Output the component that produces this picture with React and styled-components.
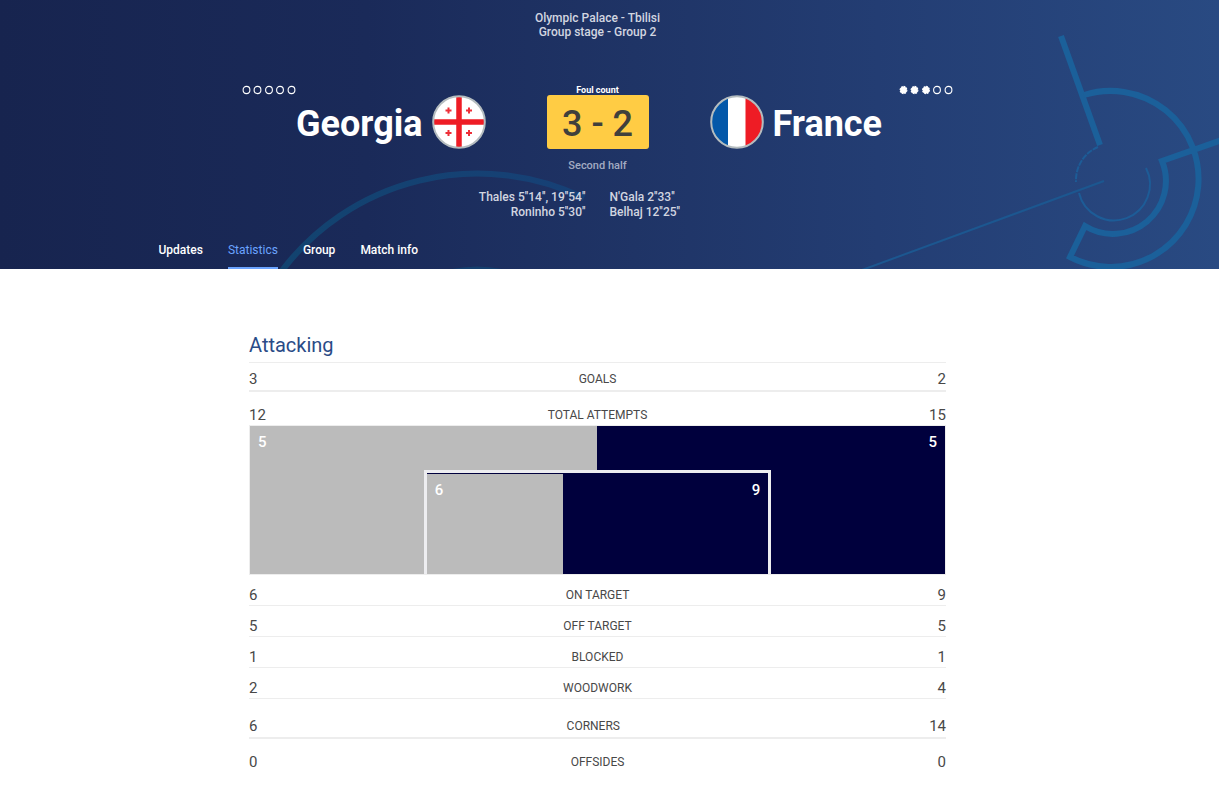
import React from 'react';
import styled, { createGlobalStyle } from 'styled-components';

const tabs = ['Updates', 'Statistics', 'Group', 'Match info'];

const mainStats = [
  { label: 'Goals', home: 3, away: 2 },
];

const attempts = {
  label: 'Total attempts', home: 12, away: 15,
};

const attemptStats = [
  { label: 'On target', home: 6, away: 9 },
  { label: 'Off target', home: 5, away: 5 },
  { label: 'Blocked', home: 1, away: 1 },
  { label: 'Woodwork', home: 2, away: 4 },
];

function HeaderArt() {
  return (
    <HeaderArtStyled viewBox="0 0 1219 269" preserveAspectRatio="xMidYMid slice" aria-hidden="true">
      <defs>
        <linearGradient id="arcFade" gradientUnits="userSpaceOnUse" x1="280" y1="0" x2="590" y2="0">
          <stop offset="0" stopColor="#12436f" />
          <stop offset="1" stopColor="#174076" />
        </linearGradient>
      </defs>
      <g fill="none">
        <path d="M281 272 A245 245 0 0 1 584 198" stroke="url(#arcFade)" strokeWidth="6" />
        <path d="M440 274 Q477 263 514 274" stroke="#15406f" strokeWidth="4" />
        <g stroke="#1b609a" strokeWidth="6">
          <path d="M1061 36 L1100 145" />
          <path d="M1084 95 A88 88 0 1 1 1070 257 L1085 226 A53 53 0 0 0 1162 161 L1222 140" />
        </g>
        <path d="M1098 147 A36 36 0 0 0 1076 182" stroke="#1d5c97" strokeWidth="2" strokeDasharray="6 1" />
        <path d="M1079 193 A36 36 0 1 0 1146 168" stroke="#1d5c97" strokeWidth="2" />
        <path d="M862 270 L1104 181" stroke="#1c5790" strokeWidth="2" />
      </g>
    </HeaderArtStyled>
  );
}

function FoulDots({ count }) {
  return (
    <svg width="54" height="10" viewBox="0 0 54 10" role="img" aria-label={`${count} fouls`}>
      {[4.5, 15.5, 27, 38, 49.5].map((cx, i) => (
        <ellipse
          key={cx}
          cx={cx}
          cy="5"
          rx="3.4"
          ry="3.6"
          fill={i < count ? '#fff' : 'none'}
          stroke="#fff"
          strokeWidth="1.1"
          strokeDasharray={i < count ? '1.8 0.9' : undefined}
        />
      ))}
    </svg>
  );
}

function GeorgiaFlag() {
  return (
    <svg width="54" height="54" viewBox="0 0 54 54" role="img" aria-label="Georgia flag">
      <circle cx="27" cy="27" r="26" fill="#fff" />
      <path d="M27 2 V52 M2 27 H52" stroke="#ee1c25" strokeWidth="5.5" />
      <path
        d="M16.5 12.5 v6 M13.5 15.5 h6 M37 12.5 v6 M34 15.5 h6 M16.5 35 v6 M13.5 38 h6 M37 35 v6 M34 38 h6"
        stroke="#ee2f38"
        strokeWidth="2"
      />
      <circle cx="27" cy="27" r="25.8" fill="none" stroke="#b4bcbf" strokeWidth="2" />
    </svg>
  );
}

function FranceFlag() {
  return (
    <svg width="54" height="54" viewBox="0 0 54 54" role="img" aria-label="France flag">
      <clipPath id="franceClip"><circle cx="27" cy="27" r="26" /></clipPath>
      <g clipPath="url(#franceClip)">
        <rect width="54" height="54" fill="#fff" />
        <rect width="18" height="54" fill="#0458a9" />
        <rect x="35.5" width="19" height="54" fill="#ee1c25" />
      </g>
      <circle cx="27" cy="27" r="25.8" fill="none" stroke="#b4bcbf" strokeWidth="2" />
    </svg>
  );
}

function StatRow({ stat, size }) {
  return (
    <StatRowStyled $size={size}>
      <td>{stat.home}</td>
      <th scope="row">{stat.label}</th>
      <td>{stat.away}</td>
    </StatRowStyled>
  );
}

function Pitch() {
  return (
    <PitchStyled>
      <PitchValue>5</PitchValue>
      <GoalArea>
        <GoalAreaSide style={{ width: `${(6 / 15) * 100}%` }}>6</GoalAreaSide>
        <PitchValue>9</PitchValue>
      </GoalArea>
      <PitchValue>5</PitchValue>
    </PitchStyled>
  );
}

function App() {
  return (
    <>
      <GlobalStyle />
      <HeaderStyled>
        <HeaderArt />
        <HeaderContent>
          <Venue>
            Olympic Palace - Tbilisi
            <br />
            Group stage - Group 2
          </Venue>
          <FoulRow>
            <FoulDots count={0} />
            <span>Foul count</span>
            <FoulDots count={3} />
          </FoulRow>
          <ScoreRow>
            <Team $home>
              <h2>Georgia</h2>
              <GeorgiaFlag />
            </Team>
            <Score>3 - 2</Score>
            <Team>
              <FranceFlag />
              <h2>France</h2>
            </Team>
          </ScoreRow>
          <Period>Second half</Period>
          <Scorers>
            <p>
              Thales 5&apos;&apos;14&apos;&apos;, 19&apos;&apos;54&apos;&apos;
              <br />
              Roninho 5&apos;&apos;30&apos;&apos;
            </p>
            <p>
              N&apos;Gala 2&apos;&apos;33&apos;&apos;
              <br />
              Belhaj 12&apos;&apos;25&apos;&apos;
            </p>
          </Scorers>
          <TabsStyled>
            {tabs.map((tab) => (
              <TabLink
                key={tab}
                href={`#${tab.toLowerCase().replace(' ', '-')}`}
                $active={tab === 'Statistics'}
                aria-current={tab === 'Statistics' ? 'page' : undefined}
              >
                {tab}
              </TabLink>
            ))}
          </TabsStyled>
        </HeaderContent>
      </HeaderStyled>

      <MainStyled>
        <StatsSection>
          <h1>Attacking</h1>
          <table>
            <tbody>
              {mainStats.map((stat) => (
                <StatRow key={stat.label} stat={stat} size="first" />
              ))}
              <StatRow stat={attempts} size="chart" />
              <tr>
                <PitchCell colSpan="3"><Pitch /></PitchCell>
              </tr>
              {attemptStats.map((stat) => (
                <StatRow key={stat.label} stat={stat} size="small" />
              ))}
              <StatRow stat={{ label: 'Corners', home: 6, away: 14 }} size="large" />
              <StatRow stat={{ label: 'Offsides', home: 0, away: 0 }} size="chart" />
            </tbody>
          </table>
        </StatsSection>
      </MainStyled>
    </>
  );
}

const GlobalStyle = createGlobalStyle`
  * {
    margin: 0;
    padding: 0;
    box-sizing: border-box;
  }
  body {
    background: #fff;
    color: #484848;
    font-family: Roboto, "Liberation Sans", sans-serif;
    font-size: 12px;
  }
  svg {
    display: block;
  }
`;

const HeaderStyled = styled.header`
  position: relative;
  background: linear-gradient(90deg, #17244f 0%, #1a2a59 30%, #1f3466 52%, #233d73 72%, #294a82 100%);
  color: #fff;
`;

const HeaderArtStyled = styled.svg`
  position: absolute;
  inset: 0;
  width: 100%;
  height: 100%;
`;

const HeaderContent = styled.div`
  position: relative;
  display: flex;
  flex-direction: column;
  align-items: center;
  padding: 11px 24px 0 0;
`;

const Venue = styled.p`
  color: #d2d6e0;
  line-height: 14px;
  font-weight: 500;
  text-align: center;
`;

const FoulRow = styled.div`
  display: flex;
  justify-content: space-between;
  width: 100%;
  max-width: 711px;
  margin-top: 46px;
  span {
    font-size: 9px;
    font-weight: 700;
    line-height: 10px;
  }
`;

const ScoreRow = styled.div`
  display: grid;
  grid-template-columns: 1fr 102px 1fr;
  gap: 61px;
  width: 100%;
  max-width: 878px;
`;

const Team = styled.div`
  display: flex;
  align-items: center;
  justify-content: ${(props) => (props.$home ? 'flex-end' : 'flex-start')};
  gap: 9px;
  h2 {
    padding-top: 4px;
    font-size: 36px;
    font-weight: 700;
    line-height: 50px;
  }
`;

const Score = styled.p`
  border-radius: 3px;
  background: #ffcc44;
  color: #40403c;
  font-size: 36px;
  font-weight: 500;
  line-height: 54px;
  padding-top: 2px;
  height: 54px;
  text-align: center;
`;

const Period = styled.p`
  margin-top: 9px;
  color: #a3abc2;
  font-size: 11px;
  font-weight: 500;
  line-height: 16px;
`;

const Scorers = styled.div`
  display: grid;
  grid-template-columns: 1fr 1fr;
  gap: 24px;
  width: 100%;
  max-width: 711px;
  margin-top: 16px;
  color: #d2d6e0;
  font-weight: 500;
  line-height: 15px;
  p:first-child {
    text-align: right;
  }
`;

const TabsStyled = styled.nav`
  display: flex;
  gap: 25px;
  width: 100%;
  max-width: 878px;
  margin-top: 21px;
`;

const TabLink = styled.a`
  padding-bottom: 8px;
  border-bottom: 2px solid ${(props) => (props.$active ? '#6ba4ff' : 'transparent')};
  color: ${(props) => (props.$active ? '#6ba4ff' : '#fff')};
  font-weight: ${(props) => (props.$active ? 400 : 500)};
  line-height: 18px;
  text-decoration: none;
`;

const MainStyled = styled.main`
  display: flex;
  justify-content: center;
  padding: 62px 24px 16px 0;
`;

const StatsSection = styled.section`
  width: 100%;
  max-width: 697px;
  h1 {
    padding-bottom: 3px;
    border-bottom: 1px solid #ededed;
    color: #2a4b87;
    font-size: 20px;
    font-weight: 400;
    line-height: 28px;
  }
  table, tbody {
    display: block;
  }
  tr {
    display: flex;
    justify-content: space-between;
  }
`;

const rowPadding = {
  first: '7px 0 2px',
  chart: '14px 0 1px',
  small: '11px 0 1px',
  large: '18px 0 2px',
};

const rowBorder = {
  first: '2px',
  chart: '0',
  small: '1px',
  large: '2px',
};

const StatRowStyled = styled.tr`
  padding: ${(props) => rowPadding[props.$size]};
  border-bottom: ${(props) => rowBorder[props.$size]} solid #ededed;
  td, th {
    font-weight: 400;
    line-height: 18px;
  }
  td {
    font-size: 15px;
  }
  th {
    text-transform: uppercase;
  }
`;

const PitchCell = styled.td`
  flex: 1;
  border: 1px solid #ededed;
`;

const PitchStyled = styled.div`
  display: grid;
  grid-template-columns: 1fr 2fr 1fr;
  height: 148px;
  background: linear-gradient(90deg, #bbb 50%, #00003d 50%);
`;

const PitchValue = styled.span`
  padding: 7px 8px;
  color: #fff;
  font-size: 15px;
  font-weight: 500;
  line-height: 18px;
  &:last-child {
    text-align: right;
  }
`;

const GoalArea = styled.div`
  display: flex;
  justify-content: space-between;
  align-self: end;
  height: 104px;
  padding-top: 1px;
  border: 3px solid #ededf0;
  border-bottom: 0;
  background: #00003d;
`;

const GoalAreaSide = styled(PitchValue)`
  background: #bbb;
`;

export default App;
